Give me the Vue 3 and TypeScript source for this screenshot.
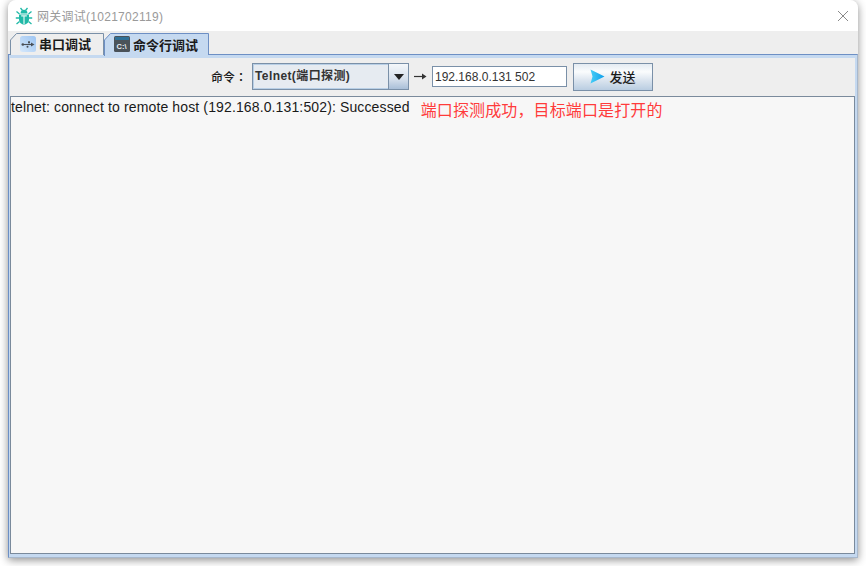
<script setup lang="ts">
const message: string = 'telnet: connect to remote host (192.168.0.131:502): Successed'
const note: string = '端口探测成功，目标端口是打开的'
</script>

<template>
  <div class="stage">
    <div class="window">
      <header class="titlebar">
        <svg class="bug" width="18" height="18" viewBox="0 0 18 18">
          <path d="M5.500 1l2 2.500M12.500 1l-2 2.500M1.500 4.500l3 2.500M16.500 4.500l-3 2.500M.8 11h3.500M17.200 11h-3.500M1.500 17l3-2.500M16.500 17l-3-2.500" fill="none" stroke="#20b9a7" stroke-width="1.300" />
          <path d="M5.500 6.500C5.500 4 7 2.800 9 2.800s3.500 1.200 3.500 3.700z" fill="#20b9a7" />
          <path d="M4 7.500h10V12c0 3.200-2 5.500-5 5.500S4 15.200 4 12z" fill="#20b9a7" />
          <path d="M6.200 8.300h5.600v1.200H9.600v7.500H8.400V9.500H6.200z" fill="#e4f7f4" />
        </svg>
        <span class="title">网关调试(1021702119)</span>
        <svg class="close" width="12" height="12" viewBox="0 0 12 12">
          <path d="M1 1l10 10M11 1L1 11" stroke="#8a8a8a" stroke-width="1" fill="none" />
        </svg>
      </header>

      <div class="tabs">
        <div class="tab first">
          <svg class="tab-shape" width="94" height="22" viewBox="0 0 94 22">
            <path d="M.5 22V7L6.500.5H93.500V22" fill="#eeeeee" stroke="#7a90a8" />
          </svg>
          <svg class="tab-icon" width="16" height="16" viewBox="0 0 16 16">
            <defs>
              <linearGradient id="usb" x1="0" y1="1" x2="1" y2="0">
                <stop offset="0" stop-color="#d6e8fb" />
                <stop offset="1" stop-color="#9cc4f2" />
              </linearGradient>
            </defs>
            <rect width="16" height="16" rx="2.500" fill="url(#usb)" />
            <path d="M2.500 8.500h10" stroke="#4a5058" stroke-width="1.100" />
            <path d="M11 6.500l3.500 2-3.500 2z" fill="#4a5058" />
            <circle cx="2.800" cy="8.500" r="1.300" fill="#4a5058" />
            <rect x="8" y="5.300" width="2" height="2" fill="#4a5058" />
            <circle cx="7.500" cy="10.800" r="1" fill="#4a5058" />
          </svg>
          <span>串口调试</span>
        </div>
        <div class="tab second">
          <svg class="tab-shape" width="106" height="23" viewBox="0 0 106 23">
            <path d="M.5 23V7L6.500.5H104.500V22" fill="#c5d9f0" stroke="#6d8fc4" />
          </svg>
          <svg class="tab-icon" width="16" height="16" viewBox="0 0 16 16">
            <rect width="16" height="16" rx="1.500" fill="#4a5259" />
            <rect x="1" y="1" width="14" height="3" fill="#2f7097" />
            <text x="2.500" y="13" class="cmd-glyph">C:\</text>
          </svg>
          <span>命令行调试</span>
        </div>
      </div>

      <div class="pane">
        <div class="toolbar">
          <span class="label">命令：</span>
          <div class="combo">
            <span class="combo-text">Telnet(端口探测)</span>
            <span class="combo-arrow"><i class="caret"></i></span>
          </div>
          <svg class="arrow" width="13" height="9" viewBox="0 0 13 9">
            <path d="M0 4.500h9" stroke="#333" stroke-width="1.200" />
            <path d="M8 1.500l4.500 3-4.500 3z" fill="#333" />
          </svg>
          <input class="address" value="192.168.0.131 502" />
          <button class="send" type="button">
            <svg width="15" height="15" viewBox="0 0 15 15">
              <defs>
                <linearGradient id="play" x1="0" y1="0" x2="1" y2="0">
                  <stop offset="0" stop-color="#45cdf6" />
                  <stop offset="1" stop-color="#0f9fec" />
                </linearGradient>
              </defs>
              <path d="M.5.5L14.500 7.500.5 14.500 2.500 7.500z" fill="url(#play)" />
            </svg>
            <span class="send-text">发送</span>
          </button>
        </div>
        <div class="output">
          <span class="message">{{ message }}</span>
          <span class="note">{{ note }}</span>
        </div>
      </div>
    </div>
  </div>
</template>

<style>
html, body { margin: 0; background: #ffffff; }
</style>

<style scoped>
.stage {
  width: 866px;
  height: 566px;
  padding: 0 8px 8px;
  box-sizing: border-box;
  overflow: hidden;
  font-family: "Liberation Sans", "Noto Sans CJK SC", sans-serif;
}
.window {
  height: 558px;
  display: flex;
  flex-direction: column;
  background: #eeeeee;
  border-radius: 8px 8px 0 0;
  box-shadow: 0 2px 8px rgba(0, 0, 0, 0.45);
}
.titlebar {
  height: 31px;
  flex: none;
  display: flex;
  align-items: center;
  padding: 0 8px 0 7px;
  background: #ffffff;
  border-radius: 8px 8px 0 0;
  box-sizing: border-box;
}
.bug { flex: none; }
.title {
  margin-left: 4px;
  font-size: 12px;
  letter-spacing: 0.27px;
  color: #9a9a9a;
}
.close { margin-left: auto; margin-right: 1px; }
.tabs {
  height: 23px;
  flex: none;
  display: flex;
  align-items: flex-end;
  padding-left: 2px;
  background: #eeeeee;
}
.tab {
  position: relative;
  display: flex;
  align-items: center;
  box-sizing: border-box;
  font-size: 13px;
  font-weight: 700;
  color: #1a1a1a;
  height: 21px;
}
.tab > span, .tab-icon { position: relative; }
.tab-shape { position: absolute; left: 0; top: 0; }
.first { width: 94px; padding-left: 10px; }
.second { width: 106px; padding-left: 10px; height: 22px; margin-bottom: -1px; z-index: 1; }
.tab-icon { flex: none; margin-right: 3px; }
.cmd-glyph { font: 700 7.500px "Liberation Sans", sans-serif; fill: #e8eef4; }
.pane {
  flex: 1;
  min-height: 0;
  display: flex;
  flex-direction: column;
  border-top: 1px solid #6d8fc4;
  border-left: 1px solid #6d8fc4;
  border-right: 1px solid #a8b8cc;
  border-bottom: 1px solid #a8b8cc;
  background: #eeeeee;
  box-shadow: inset 0 3px 0 #c5d9f0, inset 1px 0 0 #c5d9f0, inset -2px 0 0 #c5d9f0, inset 0 -3px 0 #c5d9f0;
  padding: 3px 2px 3px 1px;
}
.toolbar {
  height: 38px;
  flex: none;
  display: flex;
  align-items: center;
  padding-left: 201px;
  box-sizing: border-box;
  padding-bottom: 1px;
}
.label {
  font-family: "Liberation Sans", "Noto Sans CJK TC", sans-serif;
  font-size: 12px;
  font-weight: 500;
  color: #1a1a1a;
  width: 41px;
  flex: none;
}
.combo {
  width: 157px;
  height: 27px;
  flex: none;
  display: flex;
  box-sizing: border-box;
  border: 1px solid #7a90a8;
  background: #e6ebf1;
  box-shadow: inset 0 0 0 1px #b8cfe6;
}
.combo-text {
  flex: 1;
  padding-left: 2px;
  font-size: 12px;
  font-weight: 700;
  letter-spacing: 0.4px;
  line-height: 24px;
  color: #333333;
}
.combo-arrow {
  width: 20px;
  flex: none;
  display: flex;
  align-items: center;
  justify-content: center;
  box-sizing: border-box;
  border-left: 1px solid #7a90a8;
  background: linear-gradient(#f4f7fa, #d6e0ec 60%, #a9bfd8);
}
.caret {
  width: 0;
  height: 0;
  border-left: 5px solid transparent;
  border-right: 5px solid transparent;
  border-top: 6px solid #222222;
}
.arrow { margin: 0 5px; flex: none; }
.address {
  width: 135px;
  height: 21px;
  flex: none;
  box-sizing: border-box;
  border: 1px solid #7a90a8;
  background: #ffffff;
  padding: 0 2px;
  font: 12px "Liberation Sans", sans-serif;
  color: #333333;
  outline: none;
}
.send {
  width: 80px;
  height: 28px;
  flex: none;
  margin-left: 6px;
  display: flex;
  align-items: center;
  justify-content: center;
  gap: 4px;
  padding: 0;
  box-sizing: border-box;
  border: 1px solid #7a90a8;
  background: linear-gradient(#e4ebf2, #fafcfd 30%, #dde6f0 60%, #b9cde1);
  font: 13px "Liberation Sans", "Noto Sans CJK SC", sans-serif;
  color: #1a1a1a;
}
.send-text { font-weight: 500; }
.output {
  flex: 1;
  min-height: 0;
  box-sizing: border-box;
  display: flex;
  align-items: flex-start;
  border: 1px solid #7a8a9c;
  background: #f7f7f7;
}
.message { font-size: 14px; letter-spacing: 0.13px; line-height: 20px; color: #1a1a1a; }
.note { margin-left: 11px; font-size: 16px; letter-spacing: 0.13px; line-height: 27px; color: #ff3b3b; }
</style>
